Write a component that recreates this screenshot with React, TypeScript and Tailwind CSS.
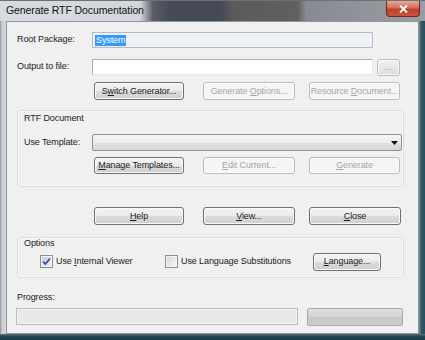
import type { ReactNode } from "react";
import clsx from "clsx";

type BtnProps = {
  children?: ReactNode;
  disabled?: boolean;
  className?: string;
};

function Btn({ children, disabled, className }: BtnProps) {
  return (
    <button
      type="button"
      className={clsx(
        "flex items-center justify-center rounded-[3px] border text-[9px] leading-none",
        disabled
          ? "border-[#b9bcbf] bg-[#f5f5f5] text-[#a6a6a6] shadow-[inset_0_0_0_1px_#fbfbfb]"
          : "border-[#707070] bg-[linear-gradient(to_bottom,#f3f3f3_0%,#ebebeb_50%,#dcdcdc_51%,#cfcfcf_100%)] text-[#1a1a1a] shadow-[inset_0_0_0_1px_#fafafa]",
        className
      )}
    >
      <span className="whitespace-pre">{children}</span>
    </button>
  );
}

function Check({ checked }: { checked?: boolean }) {
  return (
    <span className="flex h-[13px] w-[13px] shrink-0 items-center justify-center border border-[#8e8f8f] bg-[#f4f4f4]">
      <span
        className={clsx(
          "flex h-[9px] w-[9px] items-center justify-center",
          checked
            ? "bg-[linear-gradient(135deg,#c3cbe6,#eef1fa)]"
            : "bg-[linear-gradient(135deg,#d4d4d4,#f7f7f7)]"
        )}
      >
        {checked && (
          <svg width="9" height="9" viewBox="0 0 9 9">
            <path d="M1.2 4.6 L3.5 7 L7.8 1.6" fill="none" stroke="#3c4f8c" strokeWidth="1.7" />
          </svg>
        )}
      </span>
    </span>
  );
}

export default function App() {
  return (
    <div className="flex h-[340px] w-[425px] flex-col overflow-hidden bg-[#2d5560] font-['Liberation_Sans',Arial,sans-serif] text-[9px] tracking-[-0.1px] text-[#1a1a1a]">
      {/* title bar */}
      <div className="relative flex h-[21px] shrink-0 items-center border-t border-[#6d7075] bg-[linear-gradient(to_right,#d8dbdf_0%,#d3d6da_33%,#5a5d68_36%,#464a57_40%,#454956_52%,#5c5a5c_55%,#625f5e_70%,#878a90_72%,#9a9da2_100%)] pl-[6px]">
        <span className="text-[10.5px] tracking-[-0.1px] text-[#111]">Generate RTF Documentation</span>
        <div className="absolute right-[5px] top-0 flex h-[16px] w-[34px] items-center justify-center rounded-b-[4px] border border-t-0 border-[#6f2a20] bg-[linear-gradient(to_bottom,#e6a99b_0%,#d26f5c_45%,#be3f2c_55%,#c9553e_100%)]">
          <svg width="9" height="8" viewBox="0 0 9 8">
            <path d="M1 0.5 L8 7.5 M8 0.5 L1 7.5" stroke="#fff" strokeWidth="1.8" />
          </svg>
        </div>
      </div>

      <div className="flex flex-1">
        {/* left frame */}
        <div className="w-[6px] bg-[linear-gradient(to_right,#8c9196_0%,#c9cdd2_30%,#d3d6da_100%)]" />

        {/* client */}
        <div className="flex w-[413px] flex-col border border-[#8b979e] bg-[#f0f0f0] pl-[10px]">
          <div className="mt-[10px] flex h-[16px] items-center">
            <span className="w-[75px]">Root Package:</span>
            <div className="flex h-[16px] w-[281px] items-center border border-[#b6bcc6] bg-[#eef1f5] pl-[2px]">
              <span className="bg-[#3399ff] px-[1px] leading-[11px] text-white">System</span>
            </div>
          </div>

          <div className="mt-[11px] flex h-[16px] items-center">
            <span className="w-[75px]">Output to file:</span>
            <div className="h-[16px] w-[281px] border border-[#abadb3] border-b-[#e3e9ef] border-r-[#e3e9ef] bg-white" />
            <Btn disabled className="ml-[4px] h-[17px] w-[23px] border-[#9da0a3] bg-[linear-gradient(to_bottom,#f2f2f2,#dcdcdc)] text-[#8a8a8a]">
              ...
            </Btn>
          </div>

          <div className="mt-[7px] flex h-[18px]">
            <Btn className="ml-[77px] w-[90px]">
              S<u>w</u>itch Generator...
            </Btn>
            <Btn disabled className="ml-[19px] w-[92px]">
              {"Generate "}<u>O</u>ptions...
            </Btn>
            <Btn disabled className="ml-[14px] w-[91px]">
              {"Resource "}<u>D</u>ocument...
            </Btn>
          </div>

          <div className="mt-[10px] flex h-[77px] w-[387px] flex-col rounded-[3px] border border-[#dddddd] pl-[6px] shadow-[inset_0_0_0_1px_#f9f9f9]">
            <span className="mt-[2px] leading-[11px]">RTF Document</span>
            <div className="mt-[10px] flex h-[17px] items-center">
              <span className="w-[68px]">Use Template:</span>
              <div className="flex h-[17px] w-[310px] items-center justify-end rounded-[2px] border border-[#8e8f8f] bg-[linear-gradient(to_bottom,#f4f4f4_0%,#ececec_50%,#e0e0e0_51%,#d9d9d9_100%)] pr-[3px]">
                <svg width="7" height="4" viewBox="0 0 7 4">
                  <path d="M0 0 H7 L3.5 4 Z" fill="#111" />
                </svg>
              </div>
            </div>
            <div className="mt-[6px] flex h-[17px]">
              <Btn className="ml-[70px] w-[90px]">
                <u>M</u>anage Templates...
              </Btn>
              <Btn disabled className="ml-[19px] w-[92px]">
                <u>E</u>dit Current...
              </Btn>
              <Btn disabled className="ml-[14px] w-[91px]">
                <u>G</u>enerate
              </Btn>
            </div>
          </div>

          <div className="mt-[20px] flex h-[18px]">
            <Btn className="ml-[77px] w-[90px]">
              <u>H</u>elp
            </Btn>
            <Btn className="ml-[19px] w-[92px]">
              <u>V</u>iew...
            </Btn>
            <Btn className="ml-[14px] w-[92px]">
              <u>C</u>lose
            </Btn>
          </div>

          <div className="mt-[12px] flex h-[41px] w-[387px] flex-col rounded-[3px] border border-[#dddddd] pl-[6px] shadow-[inset_0_0_0_1px_#f9f9f9]">
            <span className="leading-[11px]">Options</span>
            <div className="mt-[4px] flex h-[17px] items-center">
              <label className="ml-[16px] flex w-[125px] items-center gap-[3px]">
                <Check checked />
                <span>
                  {"Use "}<u>I</u>nternal Viewer
                </span>
              </label>
              <label className="flex w-[148px] items-center gap-[3px]">
                <Check />
                <span>Use Language Substitutions</span>
              </label>
              <Btn className="h-[18px] w-[68px]">
                <u>L</u>anguage...
              </Btn>
            </div>
          </div>

          <span className="mt-[14px] leading-[11px]">Progress:</span>
          <div className="mt-[5px] flex">
            <div className="-ml-[1px] h-[17px] w-[282px] border border-[#bcbcbc] bg-[#e8e8e8] shadow-[inset_0_0_0_1px_#f4f4f4]" />
            <div className="ml-[9px] h-[18px] w-[96px] rounded-[2px] border border-[#a8a8a8] bg-[linear-gradient(to_bottom,#dedede_0%,#d4d4d4_50%,#c6c6c6_51%,#cdcdcd_100%)]" />
          </div>
        </div>

        {/* right frame */}
        <div className="w-[6px] bg-[linear-gradient(to_right,#7b8c93_0%,#2f5661_40%,#24505b_100%)]" />
      </div>

      {/* bottom frame */}
      <div className="h-[6px] shrink-0 bg-[linear-gradient(to_bottom,#5b737a_0%,#21464f_40%,#1b3f48_100%)]" />
    </div>
  );
}
